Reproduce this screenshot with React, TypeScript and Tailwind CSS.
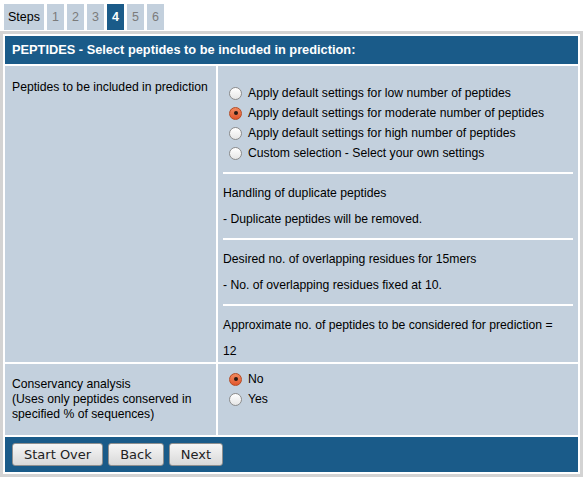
import React from 'react';

function Radio({ checked }: { checked?: boolean }) {
    if (checked) {
        return (
            <span className="w-[13px] h-[13px] rounded-full border border-[#b54a22] bg-gradient-to-b from-[#f08a60] to-[#e2552b] flex items-center justify-center shrink-0">
                <span className="w-[4px] h-[4px] rounded-full bg-[#2a1a14]"></span>
            </span>
        );
    }
    return (
        <span className="w-[13px] h-[13px] rounded-full border border-[#8c8c8c] bg-gradient-to-b from-white to-[#e6e6e6] shrink-0"></span>
    );
}

function Option({ label, checked }: { label: string; checked?: boolean }) {
    return (
        <div className="h-[20px] flex items-center gap-[6px] pl-[6px]">
            <Radio checked={checked} />
            <span>{label}</span>
        </div>
    );
}

export default function App() {
    const steps = ['1', '2', '3', '4', '5', '6'];

    return (
        <div className="w-[586px] h-[481px] bg-white text-black text-[12.2px] font-['Liberation_Sans',Arial,sans-serif]">
            {/* Step tabs */}
            <div className="flex gap-[3px] pl-[4px] pt-[4px] text-[12.5px]">
                <div className="h-[26px] w-[40px] bg-[#c3d0dd] flex items-center justify-center">Steps</div>
                {steps.map((s) => (
                    <div
                        key={s}
                        className={
                            s === '4'
                                ? 'h-[26px] w-[17px] bg-[#1a5b89] text-white font-bold flex items-center justify-center'
                                : 'h-[26px] w-[17px] bg-[#c3d0dd] text-[#7b7b7b] flex items-center justify-center'
                        }
                    >
                        {s}
                    </div>
                ))}
            </div>

            {/* Main table */}
            <div className="mt-[1px] w-[583px] border-[3px] border-[#d3d3d3] p-[2px] flex flex-col gap-[2px]">
                <div className="h-[28px] bg-[#1a5b89] text-white text-[12.8px] font-bold px-[7px] flex items-center">
                    PEPTIDES - Select peptides to be included in prediction:
                </div>

                <div className="flex gap-[2px]">
                    <div className="w-[211px] shrink-0 bg-[#c3d0dd] pl-[7px] pt-[14px] leading-[15px]">
                        Peptides to be included in prediction
                    </div>
                    <div className="flex-1 bg-[#c3d0dd] px-[5px] pt-[17px] pb-[3px]">
                        <Option label="Apply default settings for low number of peptides" />
                        <Option label="Apply default settings for moderate number of peptides" checked />
                        <Option label="Apply default settings for high number of peptides" />
                        <Option label="Custom selection - Select your own settings" />

                        <div className="mt-[9px] h-[2px] bg-white"></div>
                        <div className="mt-[11px] leading-4">Handling of duplicate peptides</div>
                        <div className="mt-[10px] leading-4">- Duplicate peptides will be removed.</div>

                        <div className="mt-[11px] h-[2px] bg-white"></div>
                        <div className="mt-[11px] leading-4">Desired no. of overlapping residues for 15mers</div>
                        <div className="mt-[10px] leading-4">- No. of overlapping residues fixed at 10.</div>

                        <div className="mt-[11px] h-[2px] bg-white"></div>
                        <div className="mt-[11px] leading-4">Approximate no. of peptides to be considered for prediction =</div>
                        <div className="mt-[10px] leading-4">12</div>
                    </div>
                </div>

                <div className="flex gap-[2px] min-h-[71px]">
                    <div className="w-[211px] shrink-0 bg-[#c3d0dd] pl-[7px] py-[12px] leading-[15px] flex items-center">
                        <div>
                            Conservancy analysis
                            <br />
                            (Uses only peptides conserved in
                            <br />
                            specified % of sequences)
                        </div>
                    </div>
                    <div className="flex-1 bg-[#c3d0dd] px-[5px] pt-[5px]">
                        <Option label="No" checked />
                        <Option label="Yes" />
                    </div>
                </div>

                <div className="h-[35px] bg-[#1a5b89] pl-[7px] flex items-center gap-[5px] font-['DejaVu_Sans',sans-serif]">
                    {['Start Over', 'Back', 'Next'].map((b) => (
                        <button
                            key={b}
                            className="h-[23px] px-[11px] rounded-[3px] border border-[#8f8f8f] bg-gradient-to-b from-[#f6f6f6] to-[#d9d9d9] text-[13px] text-[#222]"
                        >
                            {b}
                        </button>
                    ))}
                </div>
            </div>
        </div>
    );
}
